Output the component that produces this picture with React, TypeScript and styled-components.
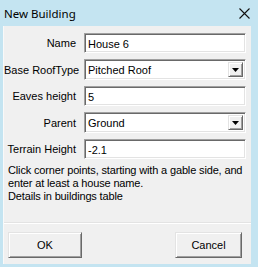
import styled, { createGlobalStyle } from "styled-components";

const GlobalStyle = createGlobalStyle`
  html, body {
    margin: 0;
    padding: 0;
    width: 258px;
    height: 267px;
    overflow: hidden;
  }
`;

const rows = [
  { label: "Name", value: "House 6", combo: false },
  { label: "Base RoofType", value: "Pitched Roof", combo: true },
  { label: "Eaves height", value: "5", combo: false },
  { label: "Parent", value: "Ground", combo: true },
  { label: "Terrain Height", value: "-2.1", combo: false },
];

const App = () => {
  return (
    <>
      <GlobalStyle />
      <WindowStyled>
        <TitleBarStyled>
          <TitleStyled>New Building</TitleStyled>
          <CloseStyled>
            <svg width="11" height="11" viewBox="0 0 11 11">
              <path d="M0.5 0.5 L10.5 10.5 M10.5 0.5 L0.5 10.5" stroke="#111" strokeWidth="1.1" />
            </svg>
          </CloseStyled>
        </TitleBarStyled>

        <ClientStyled>
          <FormStyled>
            {rows.map((row) => (
              <FormRowStyled key={row.label}>
                <LabelStyled>{row.label}</LabelStyled>
                <FieldStyled combo={row.combo}>
                  <FieldTextStyled>{row.value}</FieldTextStyled>
                  {row.combo && (
                    <DropButtonStyled>
                      <svg width="7" height="4" viewBox="0 0 7 4">
                        <path d="M0 0 H7 L3.5 4 Z" fill="#000" />
                      </svg>
                    </DropButtonStyled>
                  )}
                </FieldStyled>
              </FormRowStyled>
            ))}
          </FormStyled>

          <HintStyled>
            Click corner points, starting with a gable side, and enter at least a house name.
            <br />
            Details in buildings table
          </HintStyled>

          <FooterStyled>
            <ButtonStyled width={74}>OK</ButtonStyled>
            <ButtonStyled width={67}>Cancel</ButtonStyled>
          </FooterStyled>
        </ClientStyled>
      </WindowStyled>
    </>
  );
};

const WindowStyled = styled.div`
  width: 258px;
  height: 267px;
  box-sizing: border-box;
  display: flex;
  flex-direction: column;
  background: #c4e4f1;
  padding: 0 7px 3px 3px;
`;

const TitleBarStyled = styled.div`
  height: 26px;
  display: flex;
  align-items: center;
  justify-content: space-between;
  padding-left: 1px;
`;

const TitleStyled = styled.div`
  font-family: "Noto Sans", sans-serif;
  font-size: 11.5px;
  color: #000;
`;

const CloseStyled = styled.div`
  display: flex;
  align-items: center;
  margin-right: 1px;
  margin-top: 1px;
`;

const ClientStyled = styled.div`
  flex: 1;
  display: flex;
  flex-direction: column;
  background: #f0f0f0;
  border-left: 1px solid #f9f9f9;
  font-family: "Liberation Sans", Arial, sans-serif;
  font-size: 11px;
  color: #000;
`;

const FormStyled = styled.div`
  display: flex;
  flex-direction: column;
  gap: 6px;
  padding: 7px 5px 0 0;
`;

const FormRowStyled = styled.div`
  display: grid;
  grid-template-columns: 72px 1fr;
  column-gap: 8px;
  align-items: center;
`;

const LabelStyled = styled.div`
  text-align: right;
  white-space: nowrap;
`;

const FieldStyled = styled.div<{ combo: boolean }>`
  height: ${({ combo }) => (combo ? "21px" : "20px")};
  box-sizing: border-box;
  display: flex;
  align-items: center;
  justify-content: space-between;
  background: #fff;
  border: 1px solid;
  border-color: #a0a0a0 #fff #fff #a0a0a0;
  box-shadow: inset 1px 1px #696969, inset -1px -1px #e3e3e3;
  padding: 1px 2px 0 3px;
`;

const FieldTextStyled = styled.span`
  white-space: nowrap;
`;

const DropButtonStyled = styled.div`
  width: 15px;
  height: 15px;
  box-sizing: border-box;
  display: flex;
  align-items: center;
  justify-content: center;
  background: #f0f0f0;
  border: 1px solid;
  border-color: #e3e3e3 #696969 #696969 #e3e3e3;
  box-shadow: inset 1px 1px #fff, inset -1px -1px #a0a0a0;
  margin-top: -1px;
`;

const HintStyled = styled.div`
  padding: 5px 2px 0 4px;
  line-height: 13px;
  letter-spacing: -0.15px;
`;

const FooterStyled = styled.div`
  margin-top: auto;
  height: 41px;
  box-sizing: border-box;
  display: flex;
  justify-content: space-between;
  align-items: flex-start;
  padding: 8px 9px 0 4px;
  border-top: 1px solid #fff;
  box-shadow: 0 -1px #e3e3e3;
`;

const ButtonStyled = styled.button<{ width: number }>`
  width: ${({ width }) => width}px;
  height: 26px;
  box-sizing: border-box;
  background: #f0f0f0;
  border: 1px solid;
  border-color: #e3e3e3 #696969 #696969 #e3e3e3;
  box-shadow: inset 1px 1px #fff, inset -1px -1px #a0a0a0;
  font-family: "Liberation Sans", Arial, sans-serif;
  font-size: 11px;
  color: #000;
  padding: 0;
`;

export default App;
